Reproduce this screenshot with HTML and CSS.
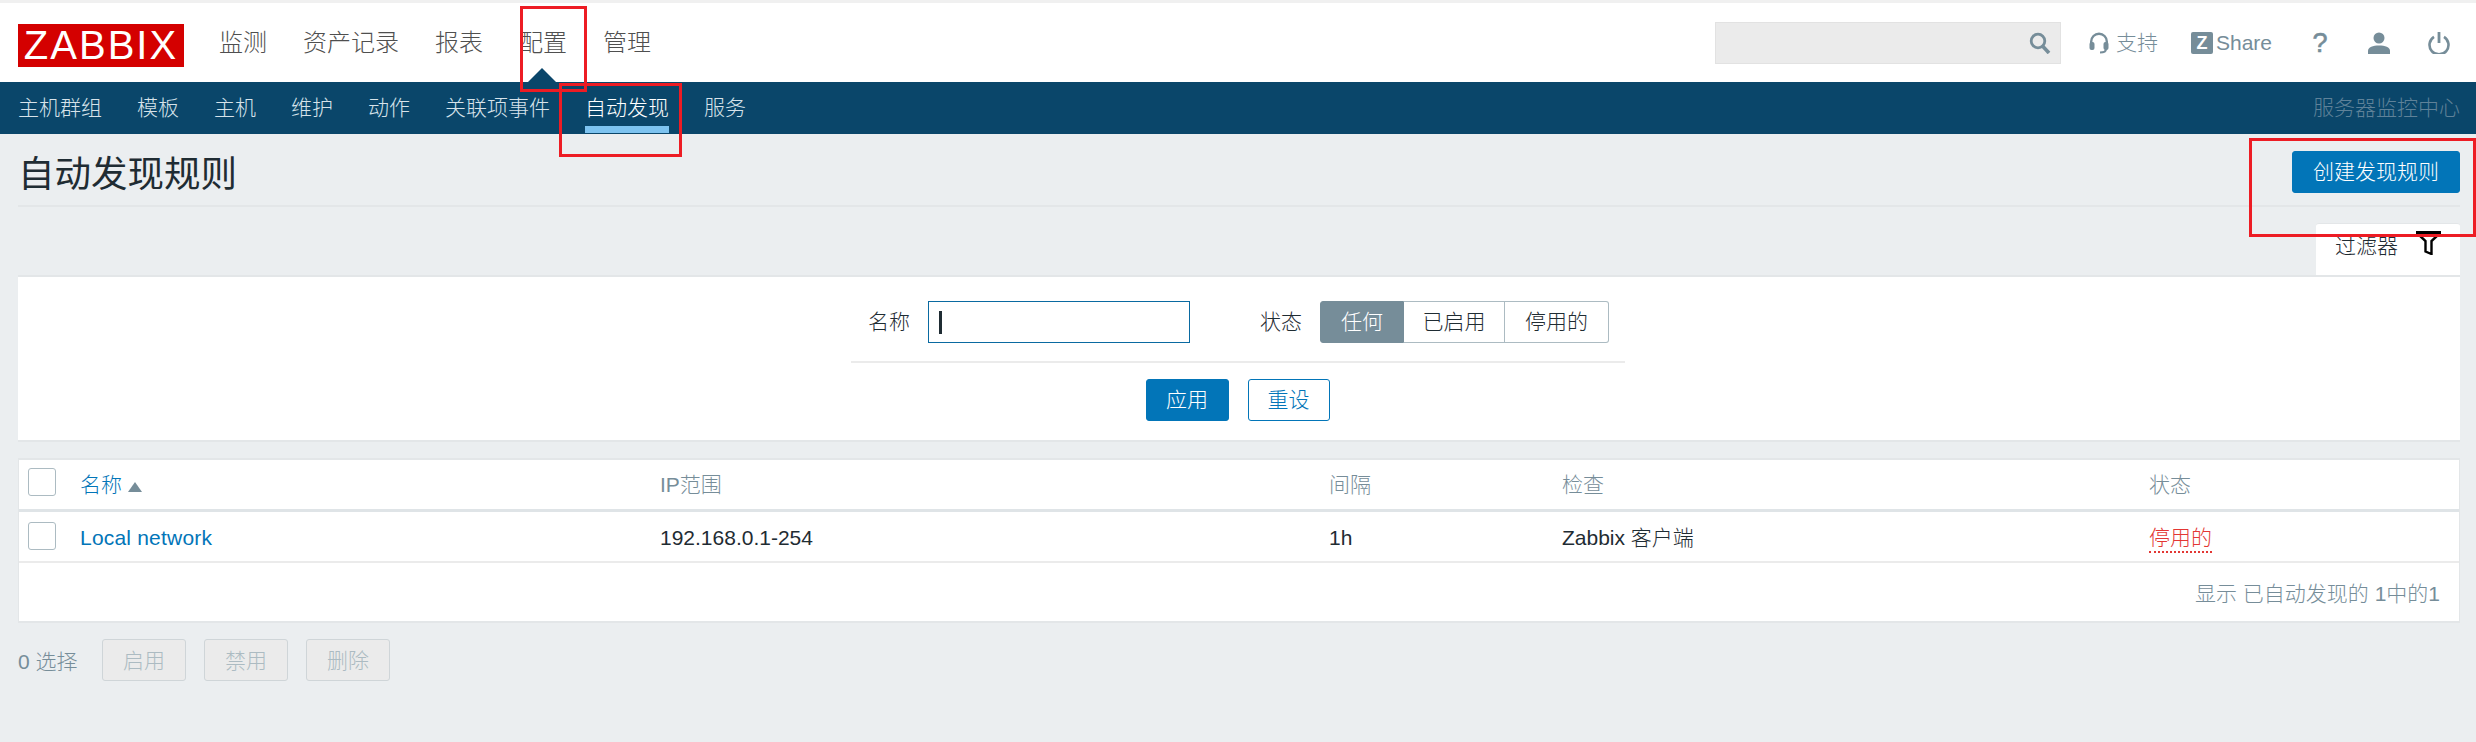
FILE: index.html
```html
<!DOCTYPE html>
<html lang="zh-CN">
<head>
<meta charset="utf-8">
<title>自动发现规则</title>
<link rel="stylesheet" href="styles.css">
</head>
<body>
<header class="topbar">
  <div class="logo">ZABBIX</div>
  <nav class="mainnav">
    <a>监测</a><a>资产记录</a><a>报表</a><a class="current">配置</a><a>管理</a>
  </nav>
  <div class="tools">
    <div class="search">
      <svg class="ico" viewBox="0 0 22 22"><circle cx="9" cy="9" r="6.8" fill="none" stroke="#768d99" stroke-width="2.8"/><path d="M13.5 14l6.5 7" stroke="#768d99" stroke-width="3.6" fill="none"/></svg>
    </div>
    <a class="tool support">
      <svg class="ico" viewBox="0 0 22 22"><path d="M3.2 12V9.5a7.8 7.8 0 0 1 15.6 0V12" fill="none" stroke="#768d99" stroke-width="2.4"/><rect x="1.5" y="10" width="5" height="8" rx="2" fill="#768d99"/><rect x="15.5" y="10" width="5" height="8" rx="2" fill="#768d99"/><path d="M18 17c0 2.600-2 3.500-6 3.500" fill="none" stroke="#768d99" stroke-width="2"/></svg>
      <span>支持</span>
    </a>
    <a class="tool share">
      <span class="zbox">Z</span><span>Share</span>
    </a>
    <a class="tool help">?</a>
    <a class="tool user">
      <svg class="ico" viewBox="0 0 22 22"><circle cx="11" cy="6" r="5.500" fill="#768d99"/><path d="M0 22v-3c0-4 5-5.500 11-5.500s11 1.500 11 5.500v3z" fill="#768d99"/></svg>
    </a>
    <a class="tool power">
      <svg class="ico" viewBox="0 0 22 22"><path d="M6 4.800a9.500 9.500 0 1 0 10 0" fill="none" stroke="#768d99" stroke-width="2.600"/><path d="M11 0v11" stroke="#768d99" stroke-width="2.800"/></svg>
    </a>
  </div>
</header>
<nav class="subnav">
  <a>主机群组</a><a>模板</a><a>主机</a><a>维护</a><a>动作</a><a>关联项事件</a><a class="current">自动发现</a><a>服务</a>
  <span class="server">服务器监控中心</span>
</nav>
<main class="content">
  <div class="titlebar">
    <h1>自动发现规则</h1>
    <button class="btn primary create">创建发现规则</button>
  </div>
  <div class="tabrow">
    <div class="filtertab">
      <span>过滤器</span>
      <svg class="funnel" viewBox="0 0 25 24"><path d="M0 1.500h25" fill="none" stroke="#000" stroke-width="3"/><path d="M2 3l7.500 7v10.500l6 2.500V10L23 3" fill="none" stroke="#000" stroke-width="2.400"/></svg>
    </div>
  </div>
  <section class="filter">
    <div class="filterfields">
      <label class="lbl">名称</label>
      <div class="input"><i class="caret"></i></div>
      <label class="lbl status">状态</label>
      <div class="segmented">
        <span class="seg on">任何</span><span class="seg mid">已启用</span><span class="seg last">停用的</span>
      </div>
    </div>
    <div class="filteractions">
      <button class="btn primary">应用</button>
      <button class="btn outline">重设</button>
    </div>
  </section>
  <section class="tablewrap">
    <div class="row head">
      <div class="c0"><i class="check"></i></div>
      <div class="c1 link">名称<i class="sort"></i></div>
      <div class="c2">IP范围</div>
      <div class="c3">间隔</div>
      <div class="c4">检查</div>
      <div class="c5">状态</div>
    </div>
    <div class="row body">
      <div class="c0"><i class="check"></i></div>
      <div class="c1 link latin">Local network</div>
      <div class="c2">192.168.0.1-254</div>
      <div class="c3">1h</div>
      <div class="c4">Zabbix 客户端</div>
      <div class="c5"><span class="disabled">停用的</span></div>
    </div>
    <div class="paging">显示 已自动发现的 1中的1</div>
  </section>
  <div class="actions">
    <span class="selected">0 选择</span>
    <button class="btn off">启用</button>
    <button class="btn off">禁用</button>
    <button class="btn off">删除</button>
  </div>
</main>
<i class="mark mark1"></i>
<i class="mark mark2"></i>
<i class="mark mark3"></i>
</body>
</html>
```
FILE: styles.css
```css
* { box-sizing: border-box; }
html, body { margin: 0; padding: 0; }
body {
  width: 2476px; height: 742px; overflow: hidden; position: relative;
  background: #ebeef0; color: #1f2c33;
  font: 300 21px/28px "Liberation Sans", "Noto Sans CJK SC", sans-serif;
}
a { display: block; }
.topbar {
  height: 82px; border-top: 3px solid #f0f0f0; background: #fff;
  display: flex; align-items: center; padding: 0 26px 0 18px;
}
.logo {
  width: 166px; height: 43px; margin-top: 6px; background: #d40000; color: #fff;
  font: 400 40px/43px "Liberation Sans", sans-serif; text-align: center; letter-spacing: 2px;
}
.mainnav { display: flex; gap: 36px; margin-left: 35px; font-size: 24px; color: #4f4f4f; }
.mainnav a { position: relative; line-height: 79px; }
.mainnav a.current::after {
  content: ""; position: absolute; left: 9px; bottom: 0; border: 14px solid transparent; border-top: 0;
  border-bottom-color: #0a466a;
}
.tools { margin-left: auto; display: flex; align-items: center; color: #768d99; }
.search {
  width: 346px; height: 42px; background: #ebebeb; border: 1px solid #e2e2e2;
  display: flex; align-items: center; justify-content: flex-end; padding-right: 9px;
}
.ico { width: 22px; height: 22px; display: block; flex: none; }
.tool { display: flex; align-items: center; }
.support { margin-left: 27px; gap: 6px; }
.share { margin-left: 33px; gap: 3px; }
.zbox {
  width: 22px; height: 22px; background: #768d99; color: #fff; text-align: center; border-radius: 2px;
  font: 700 18px/22px "Liberation Sans", sans-serif;
}
.help { margin-left: 42px; width: 12px; font-size: 27px; font-weight: 400; justify-content: center; -webkit-text-stroke: 0.6px #768d99; }
.user { margin-left: 42px; }
.power { margin-left: 38px; }
.subnav {
  height: 52px; background: #0a466a; color: #d7e3ea; display: flex; gap: 35px; padding: 0 16px 0 18px;
  line-height: 52px;
}
.subnav a { height: 51px; }
.subnav a.current { color: #fff; border-bottom: 7px solid #7dc3f0; }
.server { margin-left: auto; color: #5f8299; }
.content { padding: 0 16px 0 18px; }
.titlebar {
  height: 73px; border-bottom: 2px solid #e3e6e8; display: flex; justify-content: space-between; align-items: flex-start;
}
h1 { margin: 18px 0 0; font-size: 36.5px; line-height: 46px; font-weight: 400; color: #1f2c33; }
.btn {
  height: 42px; border-radius: 3px; border: 1px solid #0275b8; font: inherit; padding: 0; display: block;
}
.primary { background: #0275b8; color: #fff; width: 83px; }
.create { width: 168px; margin-top: 17px; }
.outline { background: #fff; color: #0275b8; width: 82px; }
.tabrow { height: 68px; display: flex; justify-content: flex-end; padding-top: 16px; }
.filtertab {
  width: 144px; height: 52px; background: #fff; padding: 5px 0 0 19px; display: flex; align-items: flex-start;
  border-top: 1px solid #e3e6e8; border-radius: 3px 3px 0 0;
}
.filtertab span { margin-top: 3px; }
.funnel { width: 25px; height: 24px; margin: 2px 0 0 18px; display: block; }
.filter {
  height: 167px; background: #fff; border-top: 2px solid #e3e6e8; border-bottom: 2px solid #e3e6e8;
  padding-top: 25px; display: flex; flex-direction: column; align-items: center;
}
.filterfields {
  display: flex; align-items: center; width: 774px; height: 61px; margin-left: -2px; padding: 0 0 19px 17px; border-bottom: 2px solid #ebebeb;
}
.lbl { width: 42px; }
.input { width: 262px; height: 42px; margin-left: 18px; border: 1px solid #0a6aa1; display: flex; align-items: center; padding-left: 10px; }
.caret { width: 3px; height: 23px; background: #1f2c33; display: block; }
.status { margin-left: 70px; }
.segmented { display: flex; margin-left: 18px; height: 42px; }
.seg { display: block; text-align: center; line-height: 40px; border: 1px solid #acbbc2; }
.seg.on { width: 84px; background: #768d99; border-color: #768d99; color: #fff; border-radius: 3px 0 0 3px; }
.seg.mid { width: 101px; border-left: 0; }
.seg.last { width: 104px; border-left: 0; border-radius: 0 3px 3px 0; }
.filteractions { display: flex; gap: 19px; margin-top: 16px; margin-left: -3px; }
.tablewrap {
  margin-top: 16px; height: 165px; background: #fff; border: 2px solid #e3e6e8; border-right-width: 1px; border-left-width: 1px;
}
.row { display: grid; grid-template-columns: 61px 580px 669px 233px 587px 1fr; align-items: center; }
.head { height: 52px; border-bottom: 3px solid #dfe4e7; color: #768d99; }
.head .link { color: #0275b8; display: flex; align-items: center; }
.body { height: 51px; border-bottom: 2px solid #ebebeb; padding-top: 3px; }
.head .c0 { margin-top: -5px; }
.body .c0 { margin-top: -4px; }
.link { color: #0275b8; }
.latin { letter-spacing: 0.2px; }
.c0 { padding-left: 9px; display: flex; }
.check { display: block; width: 28px; height: 28px; border: 1px solid #acbbc2; border-radius: 3px; background: #fff; }
.sort { display: block; margin: 5px 0 0 6px; width: 0; height: 0; border: 7px solid transparent; border-top: 0; border-bottom: 10px solid #768d99; }
.disabled { color: #e33734; border-bottom: 2px dotted #e33734; display: inline-block; line-height: 26px; }
.paging { text-align: right; color: #768d99; padding: 17px 19px 0 0; }
.actions { display: flex; align-items: center; margin-top: 16px; color: #768d99; }
.selected { width: 84px; padding-top: 3px; }
.off {
  width: 84px; margin-right: 18px; padding-top: 2px; background: #ebebeb; color: #acbbc2; border: 1px solid #cfd5d8;
}
.mark { position: absolute; display: block; border: 3px solid #ed1c24; }
.mark1 { left: 520px; top: 6px; width: 67px; height: 86px; }
.mark2 { left: 559px; top: 83px; width: 123px; height: 74px; }
.mark3 { left: 2249px; top: 138px; width: 227px; height: 99px; }
```
